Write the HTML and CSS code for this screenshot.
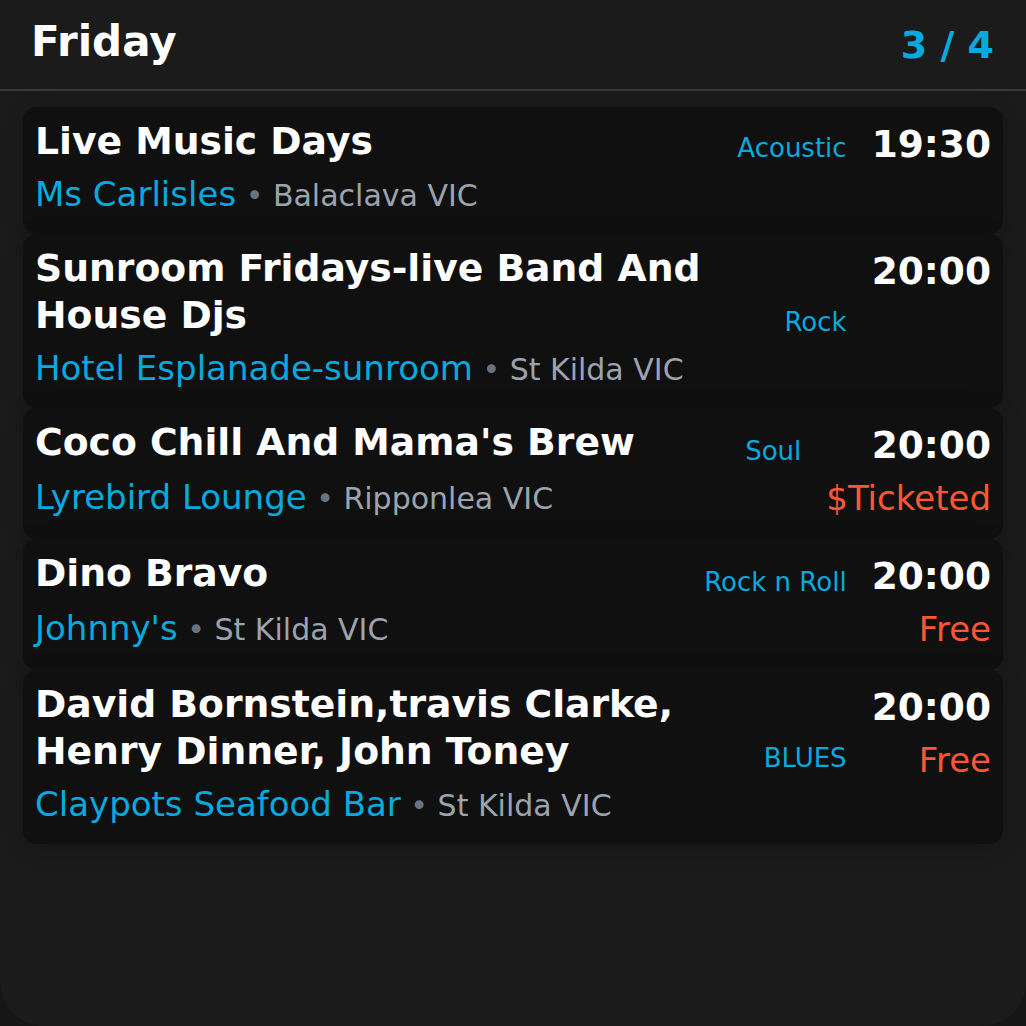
FILE: index.html
```html
<!DOCTYPE html>
<html lang="en">
<head>
<meta charset="utf-8">
<title>Friday</title>
<link rel="stylesheet" href="styles.css">
</head>
<body>
<div class="page">
  <header class="header">
    <h1 class="day">Friday</h1>
    <div class="counter">3 / 4</div>
  </header>
  <div class="list">
    <div class="card">
      <div class="title">Live Music Days</div>
      <div class="genre">Acoustic</div>
      <div class="right"><div class="time">19:30</div></div>
      <div class="venue"><span class="place">Ms Carlisles</span><span class="dot"> • </span><span class="loc">Balaclava VIC</span></div>
    </div>
    <div class="card">
      <div class="title">Sunroom Fridays-live Band And House Djs</div>
      <div class="genre">Rock</div>
      <div class="right"><div class="time">20:00</div></div>
      <div class="venue"><span class="place">Hotel Esplanade-sunroom</span><span class="dot"> • </span><span class="loc">St Kilda VIC</span></div>
    </div>
    <div class="card">
      <div class="title">Coco Chill And Mama's Brew</div>
      <div class="genre">Soul</div>
      <div class="right"><div class="time">20:00</div><div class="price">$Ticketed</div></div>
      <div class="venue"><span class="place">Lyrebird Lounge</span><span class="dot"> • </span><span class="loc">Ripponlea VIC</span></div>
    </div>
    <div class="card">
      <div class="title">Dino Bravo</div>
      <div class="genre">Rock n Roll</div>
      <div class="right"><div class="time">20:00</div><div class="price">Free</div></div>
      <div class="venue"><span class="place">Johnny's</span><span class="dot"> • </span><span class="loc">St Kilda VIC</span></div>
    </div>
    <div class="card">
      <div class="title">David Bornstein,travis Clarke, Henry Dinner, John Toney</div>
      <div class="genre">BLUES</div>
      <div class="right"><div class="time">20:00</div><div class="price">Free</div></div>
      <div class="venue"><span class="place">Claypots Seafood Bar</span><span class="dot"> • </span><span class="loc">St Kilda VIC</span></div>
    </div>
  </div>
</div>
</body>
</html>
```
FILE: styles.css
```css
html, body {
  margin: 0;
  padding: 0;
  background: #161616;
}
body {
  font-family: "DejaVu Sans", sans-serif;
  color: #ffffff;
}
.page {
  background: #1b1b1b;
  min-height: 1026px;
  box-sizing: border-box;
  border-radius: 0 0 44px 44px;
}
.header {
  display: flex;
  justify-content: space-between;
  align-items: flex-start;
  padding: 13px 32px 15px 31px;
  border-bottom: 2px solid #353b46;
}
.day {
  margin: 0;
  font-size: 42px;
  font-weight: bold;
  line-height: 58px;
}
.counter {
  margin-top: 3px;
  font-size: 38px;
  font-weight: bold;
  color: #06aade;
  line-height: 58px;
}
.list {
  padding: 16px 23px;
  display: flex;
  flex-direction: column;
}
.card {
  display: grid;
  grid-template-columns: 1fr auto auto;
  grid-template-rows: auto auto;
  column-gap: 25px;
  padding: 11px 12px 19px 12px;
  background: #101010;
  border-radius: 14px;
  box-shadow: 0 6px 24px rgba(0, 0, 0, 0.18);
}
.title {
  grid-column: 1;
  grid-row: 1;
  font-size: 37.7px;
  font-weight: bold;
  line-height: 47px;
}
.genre {
  grid-column: 2;
  grid-row: 1;
  align-self: end;
  font-size: 26px;
  line-height: 34px;
  color: #06aade;
}
.right {
  grid-column: 3;
  grid-row: 1 / span 2;
  display: flex;
  flex-direction: column;
  align-items: flex-end;
}
.time {
  font-size: 37.5px;
  font-weight: bold;
  line-height: 52px;
}
.price {
  font-size: 34px;
  line-height: 43px;
  margin-top: 6px;
  color: #ff5733;
}
.venue {
  grid-column: 1;
  grid-row: 2;
  margin-top: 8px;
  font-size: 34px;
  line-height: 42px;
}
.place {
  color: #06aade;
}
.dot {
  font-size: 30px;
  line-height: 30px;
  color: #6b7280;
}
.loc {
  font-size: 30px;
  line-height: 30px;
  color: #9ca3af;
}
```
